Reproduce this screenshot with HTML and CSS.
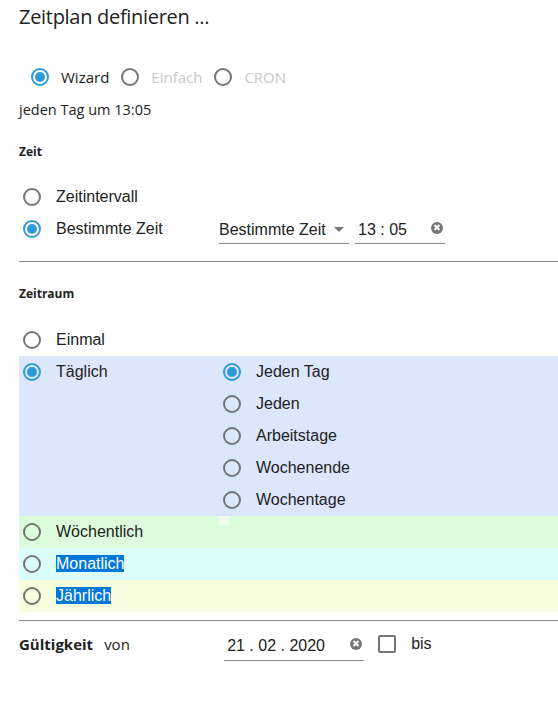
FILE: index.html
```html
<!DOCTYPE html>
<html lang="de">
<head>
<meta charset="utf-8">
<title>Zeitplan</title>
<link rel="stylesheet" href="styles.css">
</head>
<body>
<div class="page">
  <h1 class="title">Zeitplan definieren ...</h1>

  <div class="modes">
    <span class="mode"><span class="radio checked"></span><span class="mode-label">Wizard</span></span>
    <span class="mode"><span class="radio"></span><span class="mode-label disabled">Einfach</span></span>
    <span class="mode"><span class="radio"></span><span class="mode-label disabled">CRON</span></span>
  </div>
  <div class="summary">jeden Tag um 13:05</div>

  <div class="section-title">Zeit</div>
  <div class="rows">
    <div class="row"><span class="radio"></span><span class="label">Zeitintervall</span></div>
    <div class="row">
      <span class="radio checked"></span><span class="label col-left">Bestimmte Zeit</span>
      <span class="select">Bestimmte Zeit<span class="caret"></span></span>
      <span class="input time"><span>13 : 05</span><span class="clear"></span></span>
    </div>
  </div>
  <hr class="rule rule-top">

  <div class="section-title">Zeitraum</div>
  <div class="rows range">
    <div class="row"><span class="radio"></span><span class="label">Einmal</span></div>
    <div class="block daily">
      <div class="row"><span class="radio checked"></span><span class="label">Täglich</span></div>
      <div class="sub">
        <div class="row"><span class="radio checked"></span><span class="label">Jeden Tag</span></div>
        <div class="row"><span class="radio"></span><span class="label">Jeden</span></div>
        <div class="row"><span class="radio"></span><span class="label">Arbeitstage</span></div>
        <div class="row"><span class="radio"></span><span class="label">Wochenende</span></div>
        <div class="row"><span class="radio"></span><span class="label">Wochentage</span></div>
      </div>
    </div>
    <div class="row weekly"><span class="radio"></span><span class="label">Wöchentlich</span><span class="marker"></span></div>
    <div class="row monthly"><span class="radio"></span><span class="label"><span class="sel">Monatlich</span></span></div>
    <div class="row yearly"><span class="radio"></span><span class="label"><span class="sel">Jährlich</span></span></div>
  </div>
  <hr class="rule rule-bottom">

  <div class="validity">
    <span class="validity-title">Gültigkeit</span>
    <span class="von">von</span>
    <span class="input date"><span>21 . 02 . 2020</span><span class="clear"></span></span>
    <span class="checkbox"></span>
    <span class="bis">bis</span>
  </div>
</div>
</body>
</html>
```
FILE: styles.css
```css
* { box-sizing: border-box; }
html, body { margin: 0; padding: 0; background: #fff; }
body {
  font-family: "Open Sans", "Noto Sans", sans-serif;
  color: #222;
  width: 558px;
}
.page { padding-left: 19px; }

.title {
  margin: 0;
  padding-top: 2px;
  font-size: 20px;
  font-weight: 400;
  line-height: 30px;
  color: #222;
  letter-spacing: -0.3px;
}

.radio {
  flex: none;
  width: 18px;
  height: 18px;
  border: 2px solid #757575;
  border-radius: 50%;
  display: inline-flex;
  align-items: center;
  justify-content: center;
}
.radio.checked { border-color: #2f9ad6; }
.radio.checked::after {
  content: "";
  width: 10px;
  height: 10px;
  border-radius: 50%;
  background: #2f9ad6;
}

.modes {
  display: flex;
  align-items: center;
  height: 30px;
  margin-top: 30px;
  padding-left: 12px;
  gap: 12px;
  font-size: 15px;
}
.mode { display: flex; align-items: center; gap: 12px; }
.mode-label.disabled { color: #c8c8c8; }

.summary {
  font-size: 14.5px;
  line-height: 20px;
  margin-top: 8px;
}

.section-title {
  font-size: 12px;
  font-weight: 700;
  line-height: 18px;
  margin-top: 23px;
}

.rows { margin-top: 20px; }
.row {
  display: flex;
  align-items: center;
  height: 32px;
  padding-left: 4px;
  font-family: "Liberation Sans", Arial, sans-serif;
  font-size: 16px;
  position: relative;
}
.row .label { margin-left: 15px; }
.row .col-left { width: 163px; }

.select {
  display: flex;
  align-items: center;
  width: 130px;
  height: 30px;
  border-bottom: 1px solid #8a8a8a;
  padding-top: 2px;
}
.caret {
  margin-left: 8px;
  width: 0;
  height: 0;
  border-left: 5px solid transparent;
  border-right: 5px solid transparent;
  border-top: 5px solid #757575;
}
.input {
  display: flex;
  align-items: center;
  justify-content: space-between;
  height: 30px;
  border-bottom: 1px solid #8a8a8a;
  padding: 2px 2px 0 3px;
  font-family: "Liberation Sans", Arial, sans-serif;
  font-size: 16px;
}
.time { width: 90px; margin-left: 6px; }
.clear {
  position: relative;
  width: 12px;
  height: 12px;
  border-radius: 50%;
  background: #777;
  margin-bottom: 4px;
}
.clear::before, .clear::after {
  content: "";
  position: absolute;
  left: 5px;
  top: 2.5px;
  width: 2px;
  height: 7px;
  background: #fff;
  transform: rotate(45deg);
}
.clear::after { transform: rotate(-45deg); }

.rule {
  margin: 0;
  border: 0;
  border-top: 1px solid #8a8a8a;
}
.rule-top { margin-top: 16px; }

.range { margin-top: 21px; }
.block.daily {
  display: flex;
  background: #dce7fb;
  height: 160px;
}
.block.daily > .row { width: 200px; align-self: flex-start; }
.sub { display: flex; flex-direction: column; }
.weekly { background: #dcfcdc; }
.monthly { background: #dafdfe; }
.yearly { background: #f8fde0; }
.marker {
  position: absolute;
  left: 200px;
  top: 0;
  width: 10px;
  height: 9px;
  background: #eefded;
}
.sel { background: #0078d7; color: #fff; }

.rule-bottom { margin-top: 8px; }

.validity {
  display: flex;
  align-items: center;
  height: 46px;
  font-size: 15px;
}
.validity-title { font-weight: 700; }
.von { margin-left: 11px; width: 120px; }
.date {
  width: 140px;
  height: 34px;
  padding-top: 4px;
  align-self: flex-start;
  margin-top: 6px;
}
.checkbox {
  width: 18px;
  height: 18px;
  border: 2px solid #757575;
  border-radius: 2px;
  margin-left: 14px;
}
.bis {
  margin-left: 15px;
  font-family: "Liberation Sans", Arial, sans-serif;
  font-size: 16px;
}
```
